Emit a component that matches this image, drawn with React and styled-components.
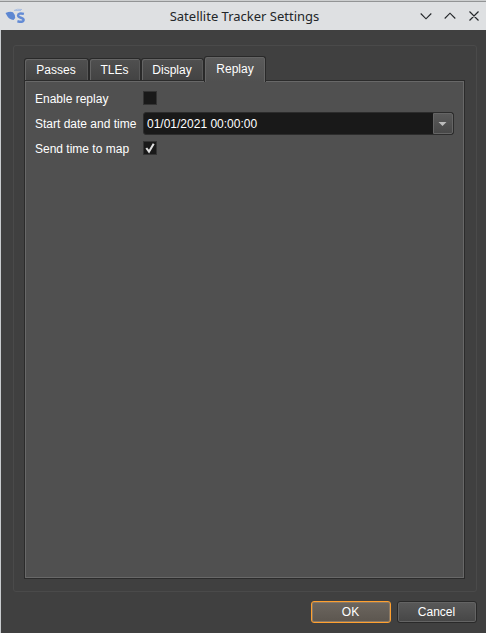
import React from 'react';
import styled, { createGlobalStyle } from 'styled-components';

const Global = createGlobalStyle`
  * { box-sizing: border-box; }
  body { margin: 0; overflow: hidden; background: #404040; }
`;

const Window = styled.div`
  width: 486px;
  height: 633px;
  display: flex;
  flex-direction: column;
  border-left: 1px solid #c9cccf;
  background: #404040;
  color: #fff;
  font: 12px/16px 'Liberation Sans', Arial, sans-serif;
`;

const TitleBar = styled.header`
  height: 30px;
  flex: none;
  display: grid;
  grid-template-columns: 80px 1fr 80px;
  align-items: center;
  margin-left: -1px;
  padding-top: 2px;
  background: linear-gradient(#cdcfd0 0 1px, #929495 1px 2px, #dee0e2 2px);
`;

const Title = styled.h1`
  margin: 0;
  padding-left: 3px;
  text-align: center;
  white-space: nowrap;
  color: #232629;
  font: 13px/18px 'Noto Sans', sans-serif;
`;

const AppIcon = styled.svg`
  width: 22px;
  height: 18px;
  margin: 1px 0 0 5px;
`;

const WindowControls = styled.svg`
  width: 80px;
  height: 20px;
  fill: none;
  stroke: #24272a;
  stroke-width: 1.15;
`;

const Group = styled.main`
  width: 464px;
  height: 547px;
  margin: 15px 0 0 12px;
  padding: 11px 11px 0 10px;
  border: 1px solid #4a4a4a;
  border-radius: 3px;
`;

const TabList = styled.div`
  display: flex;
  align-items: flex-end;
  height: 23px;
`;

const Tab = styled.button`
  position: relative;
  width: ${(p) => p.$width}px;
  height: ${(p) => (p.$active ? 26 : 22)}px;
  margin: 0 0 ${(p) => (p.$active ? -2 : 0)}px;
  padding: ${(p) => (p.$active ? '0 0 1px' : '0 1px 0 0')};
  border: 1px solid #292929;
  border-bottom: 0;
  border-radius: 3px 3px 0 0;
  background: ${(p) => (p.$active ? 'linear-gradient(#5b5b5b, #505050)' : 'linear-gradient(#505050, #434343)')};
  box-shadow: inset 1px 1px #656565, inset -1px 0 ${(p) => (p.$active ? '#656565' : '#585858')};
  color: #fff;
  font: inherit;
`;

const Panel = styled.section`
  width: 441px;
  height: 499px;
  padding: 5px 9px 0 9px;
  border: 1px solid #2b2b2b;
  box-shadow: inset 0 0 0 1px #686868;
  background: #505050;
`;

const Field = styled.label`
  display: grid;
  grid-template-columns: 109px 311px;
  align-items: center;
  height: 25px;
  padding-left: 1px;
  white-space: nowrap;
`;

const CheckBox = styled.span`
  display: block;
  width: 14px;
  height: 14px;
  margin: -2px 0 0 -1px;
  border: 1px solid #333;
  background: #191919;

  svg { display: block; width: 12px; height: 12px; }
`;

const DateInput = styled.span`
  display: flex;
  justify-content: space-between;
  width: 311px;
  height: 23px;
  margin-left: -1px;
  padding-left: 3px;
  border: 1px solid #2c2c2c;
  border-radius: 3px;
  background: #191919;
  line-height: 23px;
`;

const DropButton = styled.span`
  display: flex;
  align-items: center;
  justify-content: center;
  width: 20px;
  padding-right: 2px;
  border: 1px solid #656565;
  border-radius: 0 2px 2px 0;
  background: linear-gradient(#595959, #484848);
`;

const Footer = styled.footer`
  display: flex;
  justify-content: flex-end;
  gap: 6px;
  padding: 9px 9px 0 0;
`;

const Button = styled.button`
  width: 80px;
  height: 22px;
  padding: 0 1px 1px 0;
  border: 1px solid ${(p) => (p.$primary ? '#ffa02f' : '#292929')};
  border-radius: 3px;
  background: ${(p) => (p.$primary ? 'linear-gradient(#6c665f, #5c564f)' : 'linear-gradient(#595959, #464646)')};
  box-shadow: inset 0 0 0 1px ${(p) => (p.$primary ? '#8b7964' : '#646464')};
  color: #fff;
  font: inherit;
`;

const tabs = [['Passes', 65], ['TLEs', 52], ['Display', 63], ['Replay', 62]];

export default function App() {
  return (
    <>
      <Global />
      <Window>
        <TitleBar>
          <AppIcon viewBox="0 0 22 18">
            <path d="M0.5 5 Q5 3.2 8 4.2 Q10 6 10.2 10 L8.5 12 Q4 11 2.5 8.5Z" fill="#5d87d2" />
            <path d="M9 2.5 Q12 0.5 17 1.5M9 2.5H16" fill="none" stroke="#a9bfe4" />
            <path d="M18.9 5.9Q13.2 4.6 13.1 7.5C13.1 10.3 18.8 9.2 18.6 12.1Q18.3 14.7 12.4 13.2" fill="none" stroke="#638bd5" strokeWidth="2.5" />
          </AppIcon>
          <Title>Satellite Tracker Settings</Title>
          <WindowControls viewBox="0 0 80 20">
            <path d="M14.7 7.5 20 12.8 25.3 7.5M38.7 12.5 44 7.2 49.3 12.5M63.5 5.5 72.5 14.5M72.5 5.5 63.5 14.5" />
          </WindowControls>
        </TitleBar>
        <Group>
          <TabList>
            {tabs.map(([name, width]) => (
              <Tab key={name} $width={width} $active={name === 'Replay'}>{name}</Tab>
            ))}
          </TabList>
          <Panel>
            <Field>Enable replay<CheckBox /></Field>
            <Field>
              Start date and time
              <DateInput>
                01/01/2021 00:00:00
                <DropButton>
                  <svg width="9" height="6" viewBox="0 0 9 6">
                    <path d="M0.5 1H8.5L4.5 5Z" fill="#bcbcbc" />
                  </svg>
                </DropButton>
              </DateInput>
            </Field>
            <Field>
              Send time to map
              <CheckBox>
                <svg viewBox="0 0 12 12">
                  <path d="M2.3 6 5 9.7 9.7 1.8" fill="none" stroke="#e0e0e0" strokeWidth="2.1" />
                </svg>
              </CheckBox>
            </Field>
          </Panel>
        </Group>
        <Footer>
          <Button $primary>OK</Button>
          <Button>Cancel</Button>
        </Footer>
      </Window>
    </>
  );
}
